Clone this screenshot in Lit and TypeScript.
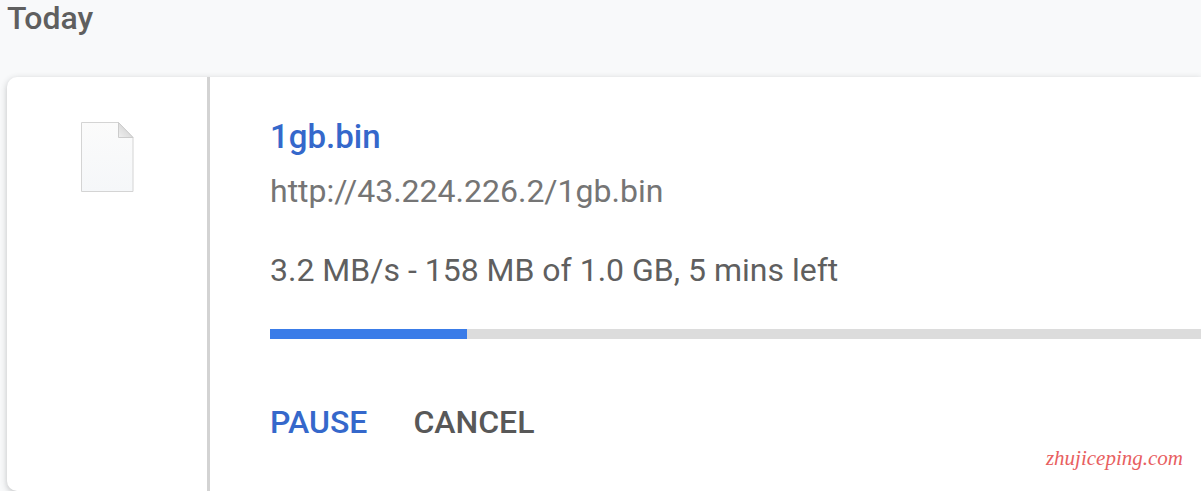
import { LitElement, html, css } from "lit";
import { customElement, property } from "lit/decorators.js";

@customElement("download-item")
class DownloadItem extends LitElement {
  @property() name = "";
  @property() url = "";
  @property() status = "";
  @property({ type: Number }) percent = 0;

  static styles = css`
    :host {
      display: grid;
      grid-template-columns: 203px minmax(0, 1fr);
      background: #fff;
      border-radius: 10px 0 0 10px;
      box-shadow: 0 2px 6px rgba(60, 64, 67, 0.3);
      color: #5f5f5f;
      font-size: 32px;
      line-height: 40px;
    }
    .side {
      display: flex;
      justify-content: center;
      align-items: flex-start;
      padding-top: 44px;
      border-right: 3px solid #d3d3d3;
    }
    .icon { display: block; }
    .body {
      display: flex;
      flex-direction: column;
      padding: 40px 0 48px 60px;
    }
    .name {
      align-self: flex-start;
      color: #3568cb;
      font-size: 33px;
      font-weight: 500;
      text-decoration: none;
    }
    .url {
      align-self: flex-start;
      margin-top: 14px;
      color: #757575;
      text-decoration: none;
    }
    .status { margin-top: 39px; }
    .track {
      height: 10px;
      margin-top: 39px;
      background: #dcdcdc;
    }
    .bar { height: 100%; background: #3a7ce8; }
    .actions {
      display: flex;
      gap: 46px;
      margin-top: 63px;
    }
    button {
      padding: 0;
      border: 0;
      background: none;
      color: #585858;
      font: inherit;
      font-weight: 500;
      cursor: pointer;
    }
    .primary { color: #3568cb; }
  `;

  render() {
    return html`
      <div class="side">
        <svg class="icon" width="54" height="72" viewBox="0 0 54 72" aria-hidden="true">
          <defs>
            <linearGradient id="paper" x1="0" y1="0" x2="0" y2="1">
              <stop offset="0" stop-color="#fbfbfb" />
              <stop offset="1" stop-color="#f5f7f9" />
            </linearGradient>
            <linearGradient id="fold" x1="0" y1="1" x2="1" y2="0">
              <stop offset="0" stop-color="#f0f0f0" />
              <stop offset="0.5" stop-color="#dcdcdc" />
            </linearGradient>
          </defs>
          <path d="M1.5 1.5H38.5L53 16.5V70.5H1.5Z" fill="url(#paper)" stroke="#d4d4d4" />
          <path d="M38.5 1.5V16.5H53Z" fill="url(#fold)" stroke="#cccccc" />
        </svg>
      </div>
      <div class="body">
        <a class="name" href="#">${this.name}</a>
        <a class="url" href="#">${this.url}</a>
        <div class="status">${this.status}</div>
        <div class="track" role="progressbar" aria-label=${this.name} aria-valuenow=${this.percent}>
          <div class="bar" style="width: ${this.percent}%"></div>
        </div>
        <div class="actions">
          <button class="primary">PAUSE</button>
          <button>CANCEL</button>
        </div>
      </div>
    `;
  }
}

@customElement("app-root")
class AppRoot extends LitElement {
  static styles = css`
    :host {
      display: flex;
      flex-direction: column;
      position: relative;
      box-sizing: border-box;
      min-height: 100vh;
      padding-left: 7px;
      overflow: hidden;
      background: #f8f9fa;
      font-family: Roboto, sans-serif;
    }
    h1 {
      margin: 0 0 41px;
      color: #5f5f5f;
      font-size: 32px;
      font-weight: 500;
      line-height: 36px;
    }
    download-item { flex: 1; }
    .mark {
      position: absolute;
      right: 18px;
      bottom: 20px;
      color: #e8605f;
      font: italic 21px/26px "Liberation Serif", serif;
    }
  `;

  render() {
    return html`
      <h1>Today</h1>
      <download-item
        name="1gb.bin"
        url="http://43.224.226.2/1gb.bin"
        status="3.2 MB/s - 158 MB of 1.0 GB, 5 mins left"
        percent="21.2"
      ></download-item>
      <div class="mark">zhujiceping.com</div>
    `;
  }
}
